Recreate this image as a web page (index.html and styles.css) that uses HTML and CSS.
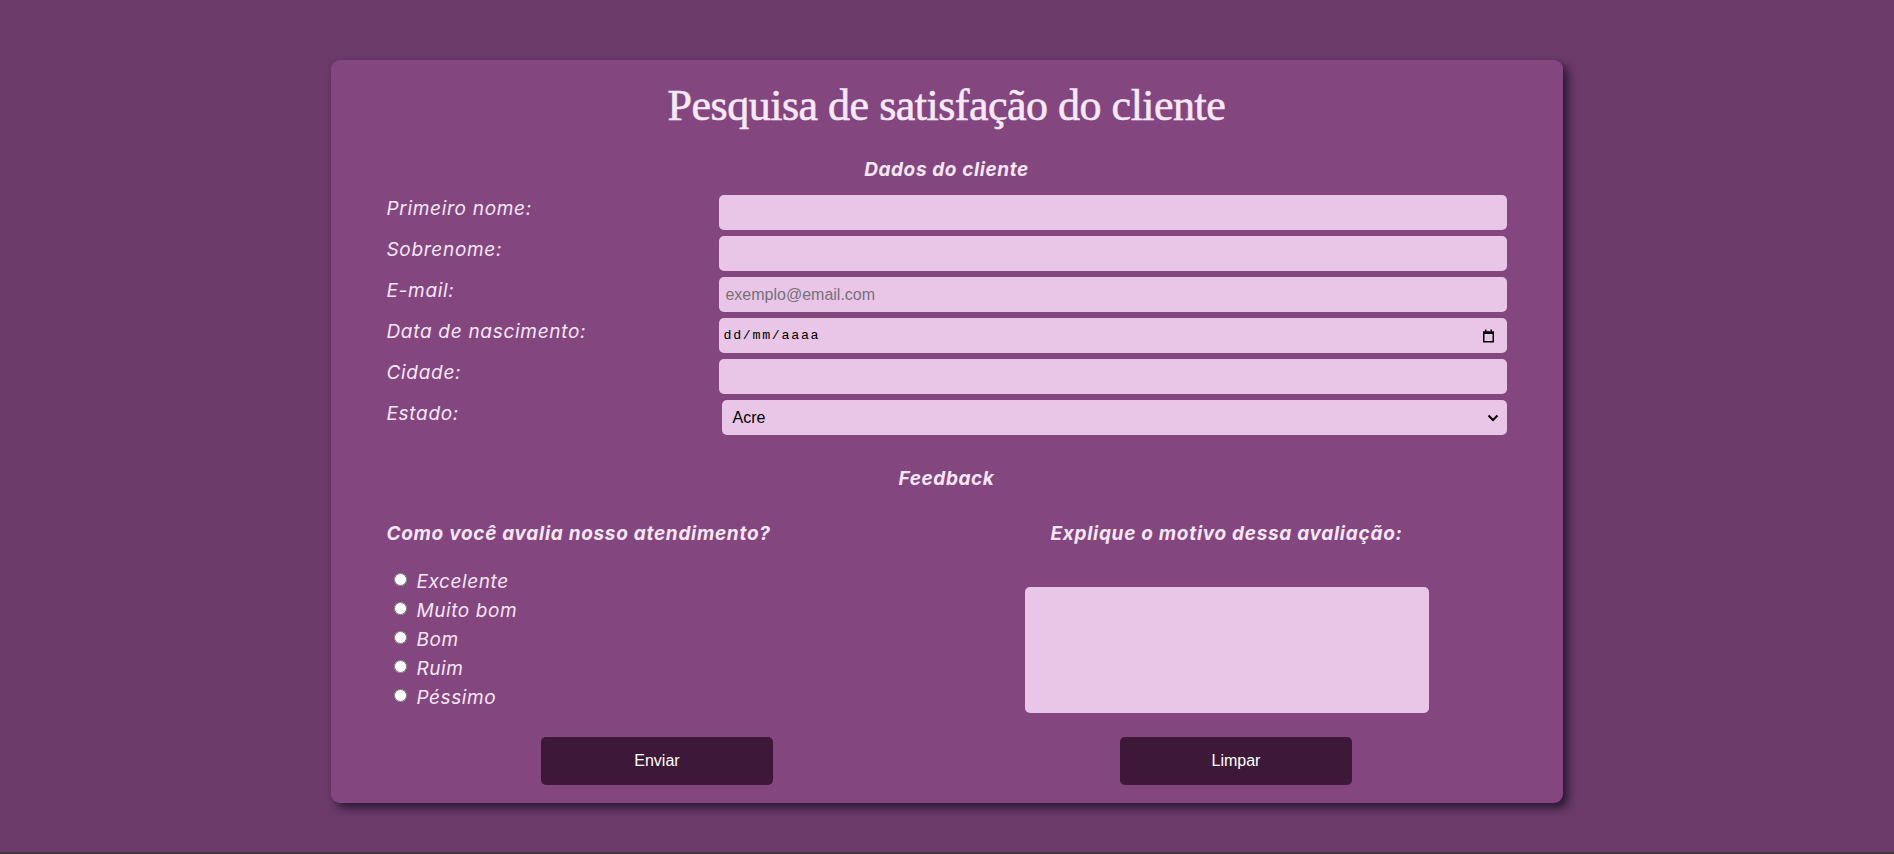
FILE: index.html
```html
<!DOCTYPE html>
<html lang="pt-BR">
<head>
<meta charset="utf-8">
<title>Pesquisa de satisfação do cliente</title>
<link rel="stylesheet" href="styles.css">
</head>
<body>
<main class="card">
  <h1 class="title">Pesquisa de satisfação do cliente</h1>
  <form class="form">
    <section class="client">
      <h2 class="section-title">Dados do cliente</h2>
      <div class="fields">
        <label class="label" for="nome">Primeiro nome:</label>
        <input class="field" id="nome" type="text">
        <label class="label" for="sobrenome">Sobrenome:</label>
        <input class="field" id="sobrenome" type="text">
        <label class="label" for="email">E-mail:</label>
        <input class="field" id="email" type="email" placeholder="exemplo@email.com">
        <label class="label" for="nasc">Data de nascimento:</label>
        <div class="field date">
          <span class="date-text">dd/mm/aaaa</span>
          <svg class="cal" width="13" height="14" viewBox="0 0 13 14"><rect x="1.75" y="3.25" width="9.5" height="9.5" fill="none" stroke="#000" stroke-width="1.5"/><rect x="1" y="2.5" width="11" height="2.5" fill="#000"/><rect x="3" y="0.5" width="1.5" height="2.5" fill="#000"/><rect x="8.5" y="0.5" width="1.5" height="2.5" fill="#000"/></svg>
        </div>
        <label class="label" for="cidade">Cidade:</label>
        <input class="field" id="cidade" type="text">
        <label class="label" for="estado">Estado:</label>
        <div class="select-wrap">
          <select class="field select" id="estado">
            <option>Acre</option>
            <option>Alagoas</option>
            <option>Amapá</option>
            <option>Amazonas</option>
            <option>Bahia</option>
          </select>
          <svg class="chev" width="12" height="8" viewBox="0 0 12 8"><path d="M1.5 1.5 L6 6 L10.5 1.5" fill="none" stroke="#000" stroke-width="2"/></svg>
        </div>
      </div>
    </section>
    <section class="feedback">
      <h2 class="section-title fb-title">Feedback</h2>
      <div class="cols">
        <div class="col-left">
          <h3 class="question">Como você avalia nosso atendimento?</h3>
          <div class="options">
            <label class="option"><input type="radio" name="av"> Excelente</label>
            <label class="option"><input type="radio" name="av"> Muito bom</label>
            <label class="option"><input type="radio" name="av"> Bom</label>
            <label class="option"><input type="radio" name="av"> Ruim</label>
            <label class="option"><input type="radio" name="av"> Péssimo</label>
          </div>
        </div>
        <div class="col-right">
          <h3 class="question">Explique o motivo dessa avaliação:</h3>
          <textarea class="reason"></textarea>
        </div>
      </div>
    </section>
    <div class="actions">
      <button type="submit" class="btn">Enviar</button>
      <button type="reset" class="btn">Limpar</button>
    </div>
  </form>
</main>
</body>
</html>
```

FILE: styles.css
```css
html {
  background: #3f3a40;
}
body {
  margin: 0;
  height: 852px;
  box-sizing: border-box;
  padding-top: 60px;
  background: #6b3a69;
  font-family: "Inter", "Liberation Sans", sans-serif;
  color: #f6e6f6;
}
.card {
  width: 65%;
  margin: 0 auto;
  box-sizing: border-box;
  background: #84467f;
  border-radius: 9px;
  box-shadow: 5px 5px 9px rgba(20, 15, 35, 0.75);
  padding: 20px 56px 18px 55px;
}
.title {
  margin: 0;
  text-align: center;
  font-family: "Liberation Serif", "DejaVu Serif", serif;
  font-weight: normal;
  font-size: 44px;
  line-height: 52px;
  letter-spacing: -0.5px;
  -webkit-text-stroke: 0.6px #f6e8f6;
  color: #f6e8f6;
}
.form {
  margin: 0;
}
.section-title {
  margin: 24px 0 12px;
  text-align: center;
  font-size: 19px;
  line-height: 27px;
  font-style: italic;
  font-weight: 700;
  letter-spacing: 0.6px;
}
.fields {
  display: grid;
  grid-template-columns: 333px 1fr;
  grid-auto-rows: 35px;
  row-gap: 6px;
}
.label {
  font-size: 19px;
  font-style: italic;
  line-height: 27px;
  letter-spacing: 0.7px;
}
.field {
  border: none;
  border-radius: 5px;
  background: #e9c6e8;
  font-family: "Liberation Sans", Arial, sans-serif;
  font-size: 16px;
  padding: 0 6px;
  height: 35px;
  box-sizing: border-box;
  color: #000;
  outline: none;
}
.field::placeholder {
  color: #777077;
}
.date {
  display: flex;
  align-items: center;
  justify-content: space-between;
  padding: 0 12px 0 4px;
}
.date-text {
  font-family: "Liberation Mono", monospace;
  font-size: 13.3px;
  letter-spacing: 1.7px;
}
.cal {
  display: block;
}
.select-wrap {
  position: relative;
  margin-left: 3px;
  display: flex;
}
.select {
  flex: 1;
  appearance: none;
  -webkit-appearance: none;
  padding: 0 10px;
}
.chev {
  position: absolute;
  right: 8px;
  top: 14px;
  pointer-events: none;
}
.fb-title {
  margin: 30px 0 0;
}
.cols {
  display: grid;
  grid-template-columns: 1fr 1fr;
}
.question {
  margin: 28px 0 0;
  font-size: 19px;
  line-height: 27px;
  font-style: italic;
  font-weight: 700;
  letter-spacing: 0.7px;
}
.col-right {
  display: flex;
  flex-direction: column;
  align-items: center;
}
.options {
  margin-top: 20px;
  display: flex;
  flex-direction: column;
}
.option {
  font-size: 19px;
  font-style: italic;
  line-height: 29px;
  height: 29px;
  letter-spacing: 0.6px;
}
.option input {
  margin: 0 3px 0 8px;
  width: 13px;
  height: 13px;
  vertical-align: 2px;
}
.reason {
  margin-top: 40px;
  width: 404px;
  height: 126px;
  border: none;
  border-radius: 5px;
  background: #e9c6e8;
  resize: none;
  box-sizing: border-box;
  outline: none;
}
.actions {
  display: grid;
  grid-template-columns: 541px 541px;
  column-gap: 38px;
  margin-top: 24px;
  justify-items: center;
}
.btn {
  width: 232px;
  height: 48px;
  border: none;
  border-radius: 5px;
  background: #3d1838;
  color: #fff;
  font-family: "Liberation Sans", Arial, sans-serif;
  font-size: 16px;
}
```
